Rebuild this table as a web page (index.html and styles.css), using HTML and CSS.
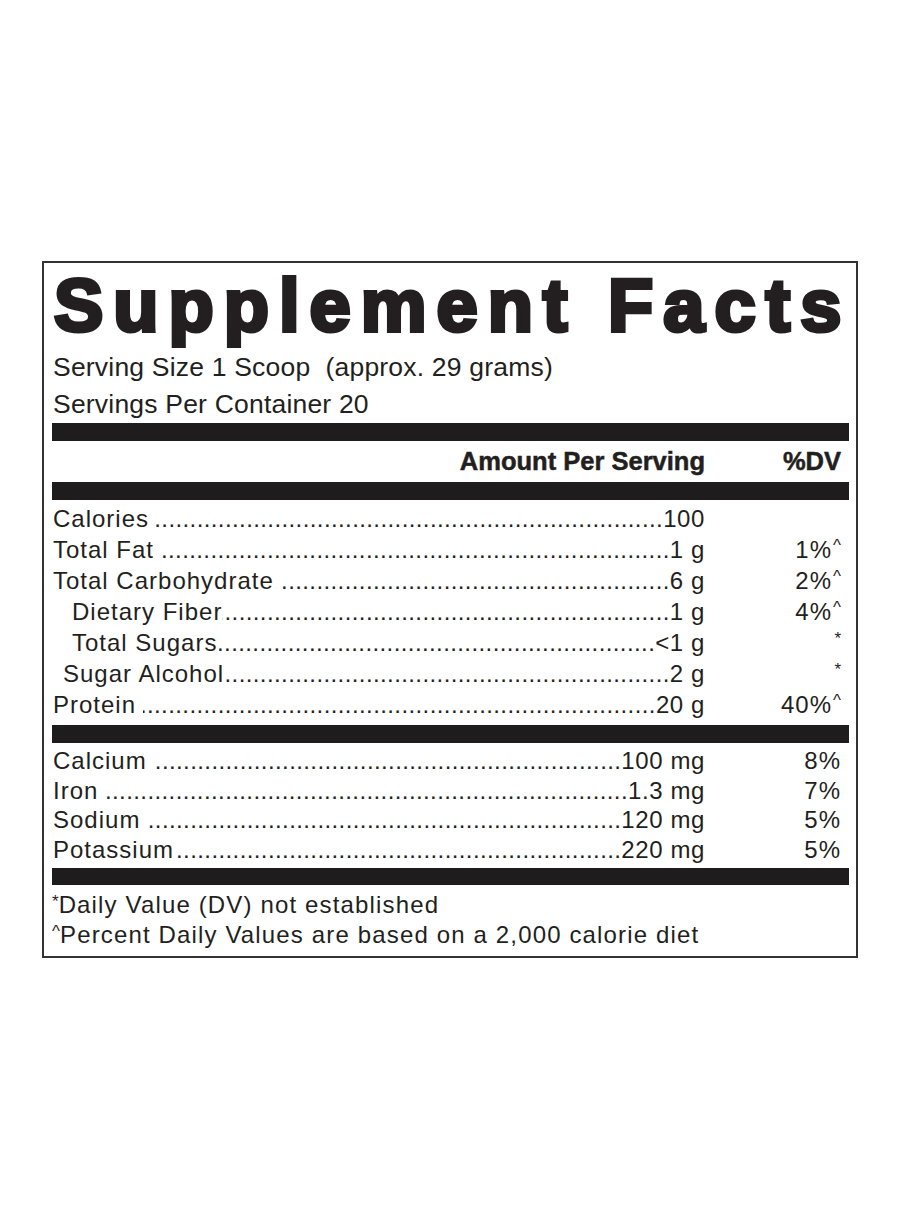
FILE: index.html
```html
<!DOCTYPE html>
<html lang="en">
<head>
    <meta charset="UTF-8">
    <meta name="viewport" content="width=device-width, initial-scale=1.0">
    <title>Supplement Facts</title>
    <link rel="stylesheet" href="styles.css">
</head>
<body>
    <div class="label">
        <h1 class="title">Supplement Facts</h1>
        <p class="serving">Serving Size 1 Scoop&nbsp; (approx. 29 grams)</p>
        <p class="serving">Servings Per Container 20</p>
        <div class="bar"></div>
        <div class="row head">
            <span class="main">Amount Per Serving</span>
            <span class="dv">%DV</span>
        </div>
        <div class="bar"></div>
        <!-- 宏量营养 -->
        <ul class="facts macro">
            <li class="row">
                <span class="main"><span class="name sp">Calories</span><span class="dots"></span><span class="amt">100</span></span>
                <span class="dv"></span>
            </li>
            <li class="row">
                <span class="main"><span class="name sp">Total Fat</span><span class="dots"></span><span class="amt">1 g</span></span>
                <span class="dv">1%<span class="mark">^</span></span>
            </li>
            <li class="row">
                <span class="main"><span class="name sp">Total Carbohydrate</span><span class="dots"></span><span class="amt">6 g</span></span>
                <span class="dv">2%<span class="mark">^</span></span>
            </li>
            <li class="row">
                <span class="main"><span class="name sub">Dietary Fiber</span><span class="dots"></span><span class="amt">1 g</span></span>
                <span class="dv">4%<span class="mark">^</span></span>
            </li>
            <li class="row">
                <span class="main"><span class="name sub">Total Sugars</span><span class="dots"></span><span class="amt">&lt;1 g</span></span>
                <span class="dv"><span class="mark">*</span></span>
            </li>
            <li class="row">
                <span class="main"><span class="name sub2">Sugar Alcohol</span><span class="dots"></span><span class="amt">2 g</span></span>
                <span class="dv"><span class="mark">*</span></span>
            </li>
            <li class="row">
                <span class="main"><span class="name sp">Protein</span><span class="dots"></span><span class="amt">20 g</span></span>
                <span class="dv">40%<span class="mark">^</span></span>
            </li>
        </ul>
        <div class="bar"></div>
        <!-- 矿物质 -->
        <ul class="facts mineral">
            <li class="row">
                <span class="main"><span class="name sp">Calcium</span><span class="dots"></span><span class="amt">100 mg</span></span>
                <span class="dv">8%</span>
            </li>
            <li class="row">
                <span class="main"><span class="name sp">Iron</span><span class="dots"></span><span class="amt">1.3 mg</span></span>
                <span class="dv">7%</span>
            </li>
            <li class="row">
                <span class="main"><span class="name sp">Sodium</span><span class="dots"></span><span class="amt">120 mg</span></span>
                <span class="dv">5%</span>
            </li>
            <li class="row">
                <span class="main"><span class="name">Potassium</span><span class="dots"></span><span class="amt">220 mg</span></span>
                <span class="dv">5%</span>
            </li>
        </ul>
        <div class="bar last"></div>
        <div class="notes">
            <p><span class="star">*</span>Daily Value (DV) not established</p>
            <p><span class="caret">^</span>Percent Daily Values are based on a 2,000 calorie diet</p>
        </div>
    </div>
</body>
</html>
```

FILE: styles.css
```css
*{
    margin: 0;
    padding: 0;
    box-sizing: border-box;
}
body{
    background-color: #fff;
    color: #231f20;
    font-family: "Liberation Sans", Arial, sans-serif;
}
.label{
    width: 816px;
    margin: 261px auto 0;
    border: 2px solid #333;
    padding: 0 7px 6px 8px;
}
/* 标题 */
.title{
    font-size: 74px;
    font-weight: bold;
    line-height: 86px;
    letter-spacing: 10px;
    -webkit-text-stroke: 4px #231f20;
    white-space: nowrap;
    padding-left: 2px;
}
.serving{
    font-size: 26.5px;
    line-height: 37px;
    letter-spacing: 0.2px;
    padding-left: 1px;
}
/* 黑色粗线 */
.bar{
    height: 18px;
    background-color: #1e1c1c;
}
.bar.last{
    height: 17px;
}
.row{
    display: flex;
    align-items: baseline;
}
.row .main{
    width: 653px;
    display: flex;
    align-items: baseline;
}
.row .dv{
    flex: 1;
    text-align: right;
    padding-right: 8px;
    white-space: nowrap;
}
.head{
    height: 41px;
    line-height: 41px;
    font-size: 25.5px;
    font-weight: bold;
    -webkit-text-stroke: 0.5px #231f20;
}
.head .main{
    justify-content: flex-end;
}
/* 营养成分 */
.facts{
    list-style: none;
    font-size: 24px;
    letter-spacing: 1px;
}
.macro{
    padding: 3px 0 5px;
}
.macro .row{
    height: 31px;
    line-height: 31px;
}
.mineral{
    padding: 3px 0 4px;
}
.mineral .row{
    height: 29.5px;
    line-height: 29.5px;
}
.name{
    white-space: nowrap;
    padding-left: 1px;
}
.name.sp{
    padding-right: 7px;
}
.name.sub{
    padding-left: 20px;
}
.name.sub2{
    padding-left: 11px;
}
.dots{
    flex: 1;
    overflow: hidden;
    white-space: nowrap;
    direction: rtl;
    letter-spacing: 0.4px;
}
.dots::after{
    content: "....................................................................................................................................";
}
.amt{
    white-space: nowrap;
    letter-spacing: 0.6px;
}
.mark{
    font-size: 17px;
    line-height: 0;
    vertical-align: 7px;
    letter-spacing: 0;
    margin-left: 1px;
}
/* 注释 */
.notes{
    padding-top: 5px;
    font-size: 24px;
    line-height: 30px;
    letter-spacing: 1.15px;
}
.notes p{
    height: 30px;
}
.star,
.caret{
    font-size: 17px;
    line-height: 0;
    vertical-align: 6px;
    letter-spacing: 0;
}
```
